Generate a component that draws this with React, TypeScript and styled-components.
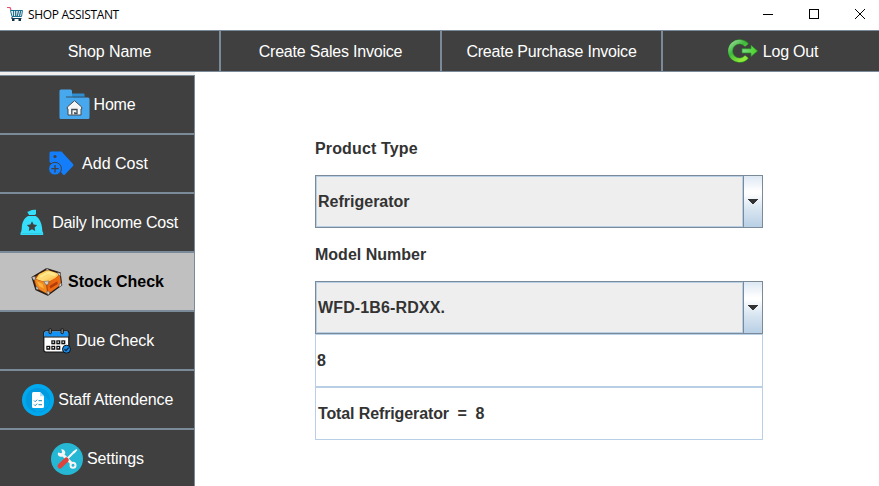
import React from 'react';
import styled, { createGlobalStyle } from 'styled-components';

const GlobalStyle = createGlobalStyle`
  * { box-sizing: border-box; }
  html, body { margin: 0; padding: 0; overflow: hidden; background: #fff; }
  svg { display: block; flex: none; }
`;

const LINE = '#7a8a99';
const SOFT_LINE = '#b8cfe5';

const Frame = styled.div`
  width: 879px;
  height: 486px;
  overflow: hidden;
  display: flex;
  flex-direction: column;
  background: #fff;
  font-family: 'Liberation Sans', Arial, sans-serif;
  font-size: 16px;
  line-height: 18px;
`;

const TitleBar = styled.header`
  flex: none;
  height: 30px;
  display: flex;
  align-items: center;
  padding-left: 7px;
  margin-right: -4px;
`;

const Title = styled.span`
  flex: 1;
  margin-left: 5px;
  font-family: 'Open Sans', 'Noto Sans', sans-serif;
  font-size: 12px;
  line-height: 16px;
  letter-spacing: -0.34px;
  color: #000;
`;

const WindowButton = styled.button`
  width: 46px;
  height: 28px;
  padding: 0;
  border: 0;
  background: none;
  display: flex;
  justify-content: center;
  align-items: flex-start;
  padding-top: 8px;
`;

const MenuBar = styled.nav`
  flex: none;
  height: 42px;
  width: 884px;
  margin-left: -1px;
  display: grid;
  grid-template-columns: repeat(4, 221px);
`;

const DarkButton = styled.button<{ $active?: boolean; $gap?: number; $shift?: number; $track?: number }>`
  display: flex;
  align-items: center;
  justify-content: center;
  gap: ${(p) => p.$gap ?? 4}px;
  margin: 0;
  padding: 0 0 0 ${(p) => (p.$shift ?? 0) * 2}px;
  border: 1px solid ${LINE};
  background: ${(p) => (p.$active ? '#c0c0c0' : '#404040')};
  color: ${(p) => (p.$active ? '#000' : '#fff')};
  font: inherit;
  font-weight: ${(p) => (p.$active ? 700 : 400)};
  letter-spacing: ${(p) => p.$track ?? 0}px;
  white-space: nowrap;
`;

const MenuText = styled.span`
  padding-top: 2px;
`;

const Body = styled.div`
  flex: 1;
  min-height: 0;
  display: flex;
`;

const Sidebar = styled.aside`
  flex: none;
  width: 196px;
  height: 416px;
  margin-left: -1px;
  padding-top: 3px;
  background: linear-gradient(#f0f0f0, #f0f0f0) no-repeat 0 0 / 196px 3px;
  display: grid;
  grid-auto-rows: 59px;
`;

const Form = styled.main`
  width: 448px;
  margin: 50px 0 0 120px;
  display: grid;
  grid-auto-rows: 53px;
  align-content: start;
  font-weight: 700;
  color: #333;
`;

const Label = styled.label<{ $track?: number }>`
  display: flex;
  align-items: center;
  letter-spacing: ${(p) => p.$track ?? 0}px;
`;

const Combo = styled.div`
  display: flex;
  border: 1px solid ${LINE};
`;

const ComboValue = styled.div<{ $track?: number }>`
  flex: 1;
  display: flex;
  align-items: center;
  padding-left: 1px;
  border: 1px solid ${SOFT_LINE};
  background: #eee;
  letter-spacing: ${(p) => p.$track ?? 0}px;
`;

const ComboArrow = styled.button`
  width: 19px;
  padding: 0;
  border: 0;
  border-left: 1px solid ${LINE};
  background: linear-gradient(#dde8f3 0%, #fff 30%, #fff 34%, #dbe7f2 62%, #b8cfe5 100%);
  display: flex;
  align-items: center;
  justify-content: center;
`;

const Output = styled.div<{ $inset: number; $track?: number }>`
  display: flex;
  align-items: center;
  padding-left: ${(p) => p.$inset}px;
  border: 1px solid ${SOFT_LINE};
  letter-spacing: ${(p) => p.$track ?? 0}px;
  white-space: pre;
`;

const CartIcon = () => (
  <svg width="16" height="16" viewBox="0 0 16 16" fill="none">
    <path d="M0 .5H3L4 3" stroke="#e8506a" strokeWidth="1.2" />
    <path d="M3.5 3.5H15.5L14.5 9.5H5Z" stroke="#176f91" />
    <path d="M6.5 4V9.5M8.7 4V9.5M10.3 9L11.5 4M12.5 9L13.6 4" stroke="#24718e" strokeWidth="1.3" />
    <path d="M5 10V11.5H14.5" stroke="#153f55" strokeWidth="1.1" />
    <path d="M5 13H7.5M11.5 13H14" stroke="#102f40" strokeWidth="1.8" />
  </svg>
);

const LogOutIcon = () => (
  <svg width="31" height="24" viewBox="0 0 31 24">
    <defs>
      <linearGradient id="ring" x1="0" y1="0" x2=".7" y2="1">
        <stop offset="0" stopColor="#9ad99a" />
        <stop offset=".45" stopColor="#3fb83c" />
        <stop offset="1" stopColor="#8fe83a" />
      </linearGradient>
      <linearGradient id="arrow" x1="0" y1="0" x2="1" y2="0">
        <stop offset="0" stopColor="#7bd68a" />
        <stop offset="1" stopColor="#48d51e" />
      </linearGradient>
    </defs>
    <path d="M19.8 6.2A9.2 9.2 0 1 0 19.8 17.8" fill="none" stroke="#24931f" strokeWidth="5" />
    <path d="M19.6 6.3A9.2 9.2 0 1 0 19.6 17.7" fill="none" stroke="url(#ring)" strokeWidth="3.9" />
    <path d="M15 9.7H24V6.2L30.6 12L24 17.4V14H15Z" fill="url(#arrow)" stroke="#259322" strokeWidth=".7" />
  </svg>
);

const HomeIcon = () => (
  <svg width="31" height="31" viewBox="0 0 31 31">
    <path d="M11 4.5H24.5Q25.5 4.5 25.5 5.5V9H11Z" fill="#2f8fd0" />
    <path d="M.5 2Q.5.5 2 .5H11.5Q13 .5 13 2V6Q13 8.5 15 8.5H29Q30.5 8.5 30.5 10V28.5Q30.5 30 29 30H2Q.5 30 .5 28.5Z" fill="#48a8ed" />
    <path d="M7 8H25.5" stroke="#31556e" strokeWidth="1" />
    <path d="M8.3 18L15.5 11.7L22.7 18V20H22V26H9V20H8.3Z" fill="#f5f5f5" stroke="#404b54" strokeWidth="1" strokeLinejoin="round" />
    <path d="M12.8 25.5V20.5H18V24.5H15.8V23" fill="none" stroke="#404b54" strokeWidth="1.3" />
  </svg>
);

const TagIcon = () => (
  <svg width="25" height="25" viewBox="0 0 25 25">
    <path d="M.5 2Q.5.5 2 .5H12.5L24 13Q25 14 24 15L16 23.5Q15 24.5 14 23.5L10 19L.5 11Z" fill="#147dfa" />
    <circle cx="6" cy="5.5" r="1.6" fill="#404040" />
    <circle cx="6" cy="17.7" r="6.4" fill="#147dfa" stroke="#404040" strokeWidth="1" />
    <path d="M6 14V21.4M2.3 17.7H9.7" stroke="#404040" strokeWidth="1.3" />
  </svg>
);

const MoneyBagIcon = () => (
  <svg width="24" height="27" viewBox="0 0 24 27" fill="#35dffc">
    <path d="M9 6L7.2 2.8Q8.5 3 10 1.8Q11.5.5 16 .7V5L14.8 6Z" />
    <path d="M8 7H15.8C19.5 9.2 21.5 14 22 18.5Q22 22 23.2 24V26H.5V24Q1.8 22 1.8 18.5C2 13.5 4 9.2 8 7Z" />
    <path d="M12 12.2L13.6 15.4L17.1 15.9L14.6 18.4L15.2 22L12 20.3L8.8 22L9.4 18.4L6.9 15.9L10.4 15.4Z" fill="#404040" />
    <path d="M1.5 24.7H22.5" stroke="#31bfd5" strokeWidth=".8" />
  </svg>
);

const BoxIcon = () => (
  <svg width="32" height="30" viewBox="0 0 32 30">
    <defs>
      <linearGradient id="lid" x1="0" y1="0" x2="1" y2="1">
        <stop offset="0" stopColor="#ffba35" />
        <stop offset=".5" stopColor="#ffdc78" />
        <stop offset="1" stopColor="#ffa326" />
      </linearGradient>
      <linearGradient id="side" x1="0" y1="0" x2="1" y2="1">
        <stop offset="0" stopColor="#d95b08" />
        <stop offset="1" stopColor="#ff7a1c" />
      </linearGradient>
    </defs>
    <path d="M1.3 10.5L15.5 1.8L29 6L30.5 18L17 28L5 22.5Z" fill="#b34707" stroke="#251d18" strokeWidth="1.5" strokeLinejoin="round" />
    <path d="M5 12L8 7L16.5 3L28.5 7L24 12L15.5 15.5Z" fill="url(#lid)" />
    <path d="M3.5 12L14.5 15.5L16.5 27L6 21Z" fill="#f08a20" />
    <path d="M16 16L29 8L30 17.5L17.5 26.5Z" fill="url(#side)" />
    <path d="M18.5 19L26.3 14.3L26.8 17L19.5 21.5Z" fill="#b53b08" />
    <path d="M9 10L17 5.5L24.5 8" stroke="#ffe78c" strokeWidth="2.4" fill="none" strokeLinejoin="round" />
    <path d="M6 14.5L11.5 17L12.8 21.5L8 19Z" fill="#ffb23c" />
    <g fill="#d0d0d0" stroke="#565656" strokeWidth=".5">
      <path d="M12.8 14.5L18 14L17 17.5L15 18Z" />
      <path d="M1 10L4.2 9.5L4.2 13L2.2 12.7Z" />
      <path d="M26.5 5.4L29.4 6.2L29.6 9L27.7 8Z" />
      <path d="M14.7 1.6L17.6 2.1L16.2 3.7Z" />
      <path d="M5 19.5L7.2 20.7L7.3 22.8L5 22Z" />
      <path d="M28.3 16.8L30.5 16V18.8L28 20.3Z" />
      <path d="M15.5 24.6L17.8 24.1L18.6 26.7L17 28Z" />
    </g>
  </svg>
);

const DAYS: [number, number][] = [
  [9.5, 12.5], [14.5, 12.5], [19.5, 12.5],
  [4.5, 18], [9.5, 18], [14.5, 18],
];

const CalendarIcon = () => (
  <svg width="28" height="26" viewBox="0 0 28 26">
    <rect x=".8" y="3" width="25" height="21" rx="2" fill="#fff" stroke="#111" strokeWidth="1.2" />
    <path d="M1.3 8.7V5Q1.3 3.5 2.8 3.5H24Q25.3 3.5 25.3 5V8.7Z" fill="#1593f5" />
    <path d="M1 9H25.8" stroke="#111" />
    <g fill="#838383" stroke="#111" strokeWidth=".9">
      <rect x="6" y=".7" width="2.4" height="5" rx="1" />
      <rect x="18" y=".7" width="2.4" height="5" rx="1" />
    </g>
    {DAYS.map(([x, y]) => (
      <g key={`${x}-${y}`}>
        <rect x={x - 1.2} y={y - 0.2} width="4" height="4" fill="#111" />
        <rect x={x} y={y + 1} width="1.5" height="1.3" fill="#eee" />
      </g>
    ))}
    <circle cx="23.5" cy="21.2" r="4" fill="#1689e5" stroke="#111" strokeWidth="1" />
    <path d="M21.5 21.3L23 22.7L25.7 19.7" fill="none" stroke="#10263b" strokeWidth="1.2" />
  </svg>
);

const DocumentIcon = () => (
  <svg width="32" height="32" viewBox="0 0 32 32">
    <circle cx="16" cy="16" r="16" fill="#00a9ee" />
    <circle cx="16" cy="16" r="12.3" fill="#0299df" />
    <path d="M21 10L27.7 17A12.3 12.3 0 0 1 15 28L10.5 23.5Z" fill="#02a7eb" />
    <path d="M11.3 8H18L22 12.2V22.5Q22 24 20.5 24H11.3Q10 24 10 22.5V9.5Q10 8 11.3 8Z" fill="#fff" />
    <path d="M18 8V12.3H22Z" fill="#a9dff5" />
    <path d="M12 16.5L13.2 17.7L15 15.7M16.5 16.7H20M12 20.5L13.2 21.7L15 19.7M16.5 20.7H20" fill="none" stroke="#1689bc" strokeWidth="1" />
  </svg>
);

const ToolsIcon = () => (
  <svg width="32" height="32" viewBox="0 0 32 32" fill="none">
    <circle cx="16" cy="16" r="16" fill="#25b7d3" />
    <path d="M11 11L21 20.8" stroke="#f5f5f5" strokeWidth="3" />
    <path d="M7 9.4L10.2 10.2L11.2 9.2L10.2 6.2C12.8 6 14.6 7.8 14.3 10.5L11.2 13.7C8.2 14 6.2 12.2 7 9.4Z" fill="#f5f5f5" />
    <circle cx="22" cy="22.2" r="2.5" stroke="#f5f5f5" strokeWidth="2" />
    <path d="M14.5 17.5L23 9" stroke="#f5f5f5" strokeWidth="2" />
    <path d="M21.7 8.7L25.4 6L26.3 7L23.5 10.5Z" fill="#fff" />
    <path d="M9 23L15.3 17" stroke="#de433d" strokeWidth="5" strokeLinecap="round" />
  </svg>
);

const ArrowGlyph = () => (
  <svg width="10" height="5" viewBox="0 0 10 5" shapeRendering="crispEdges">
    <path d="M0 0H10V1H9V2H8V3H7V4H6V5H4V4H3V3H2V2H1V1H0Z" fill="#333" />
  </svg>
);

const MinimizeGlyph = () => (
  <svg width="10" height="10" viewBox="0 0 10 10" stroke="#000" shapeRendering="crispEdges">
    <path d="M0 5.5H10" />
  </svg>
);

const MaximizeGlyph = () => (
  <svg width="10" height="10" viewBox="0 0 10 10" shapeRendering="crispEdges">
    <rect x=".5" y=".5" width="9" height="9" fill="none" stroke="#000" />
  </svg>
);

const CloseGlyph = () => (
  <svg width="10" height="10" viewBox="0 0 10 10" stroke="#000">
    <path d="M0 0L10 10M10 0L0 10" />
  </svg>
);

const MENU = [
  { text: 'Shop Name', track: -0.1, shift: 0 },
  { text: 'Create Sales Invoice', track: -0.2, shift: -0 },
  { text: 'Create Purchase Invoice', track: -0.22, shift: 0 },
  { text: 'Log Out', icon: <LogOutIcon />, track: -0.2, shift: 0, gap: 5 },
];

const SECTIONS = [
  { text: 'Home', icon: <HomeIcon />, gap: 4, shift: 0, track: -0.2 },
  { text: 'Add Cost', icon: <TagIcon />, gap: 8, shift: 1.5, track: 0 },
  { text: 'Daily Income Cost', icon: <MoneyBagIcon />, gap: 8, shift: 2, track: -0.24 },
  { text: 'Stock Check', icon: <BoxIcon />, gap: 5, shift: 0.5, track: 0, active: true },
  { text: 'Due Check', icon: <CalendarIcon />, gap: 5, shift: 1.5, track: -0.1 },
  { text: 'Staff Attendence', icon: <DocumentIcon />, gap: 4, shift: 0.8, track: -0.14 },
  { text: 'Settings', icon: <ToolsIcon />, gap: 4, shift: 0.5, track: -0.1 },
];

const Select = ({ value, track }: { value: string; track?: number }) => (
  <Combo>
    <ComboValue $track={track}>{value}</ComboValue>
    <ComboArrow aria-label="Open list"><ArrowGlyph /></ComboArrow>
  </Combo>
);

export default function App() {
  return (
    <Frame>
      <GlobalStyle />
      <TitleBar>
        <CartIcon />
        <Title>SHOP ASSISTANT</Title>
        <WindowButton aria-label="Minimize"><MinimizeGlyph /></WindowButton>
        <WindowButton aria-label="Maximize"><MaximizeGlyph /></WindowButton>
        <WindowButton aria-label="Close"><CloseGlyph /></WindowButton>
      </TitleBar>
      <MenuBar>
        {MENU.map((item) => (
          <DarkButton key={item.text} $track={item.track} $shift={item.shift} $gap={item.gap}>
            {item.icon}
            <MenuText>{item.text}</MenuText>
          </DarkButton>
        ))}
      </MenuBar>
      <Body>
        <Sidebar>
          {SECTIONS.map((item) => (
            <DarkButton
              key={item.text}
              $active={item.active}
              $gap={item.gap}
              $shift={item.shift}
              $track={item.track}
            >
              {item.icon}
              <span>{item.text}</span>
            </DarkButton>
          ))}
        </Sidebar>
        <Form>
          <Label $track={0.14}>Product Type</Label>
          <Select value="Refrigerator" />
          <Label>Model Number</Label>
          <Select value="WFD-1B6-RDXX." track={0.13} />
          <Output $inset={1}>8</Output>
          <Output $inset={2} $track={-0.12}>{'Total Refrigerator  =  8'}</Output>
        </Form>
      </Body>
    </Frame>
  );
}
